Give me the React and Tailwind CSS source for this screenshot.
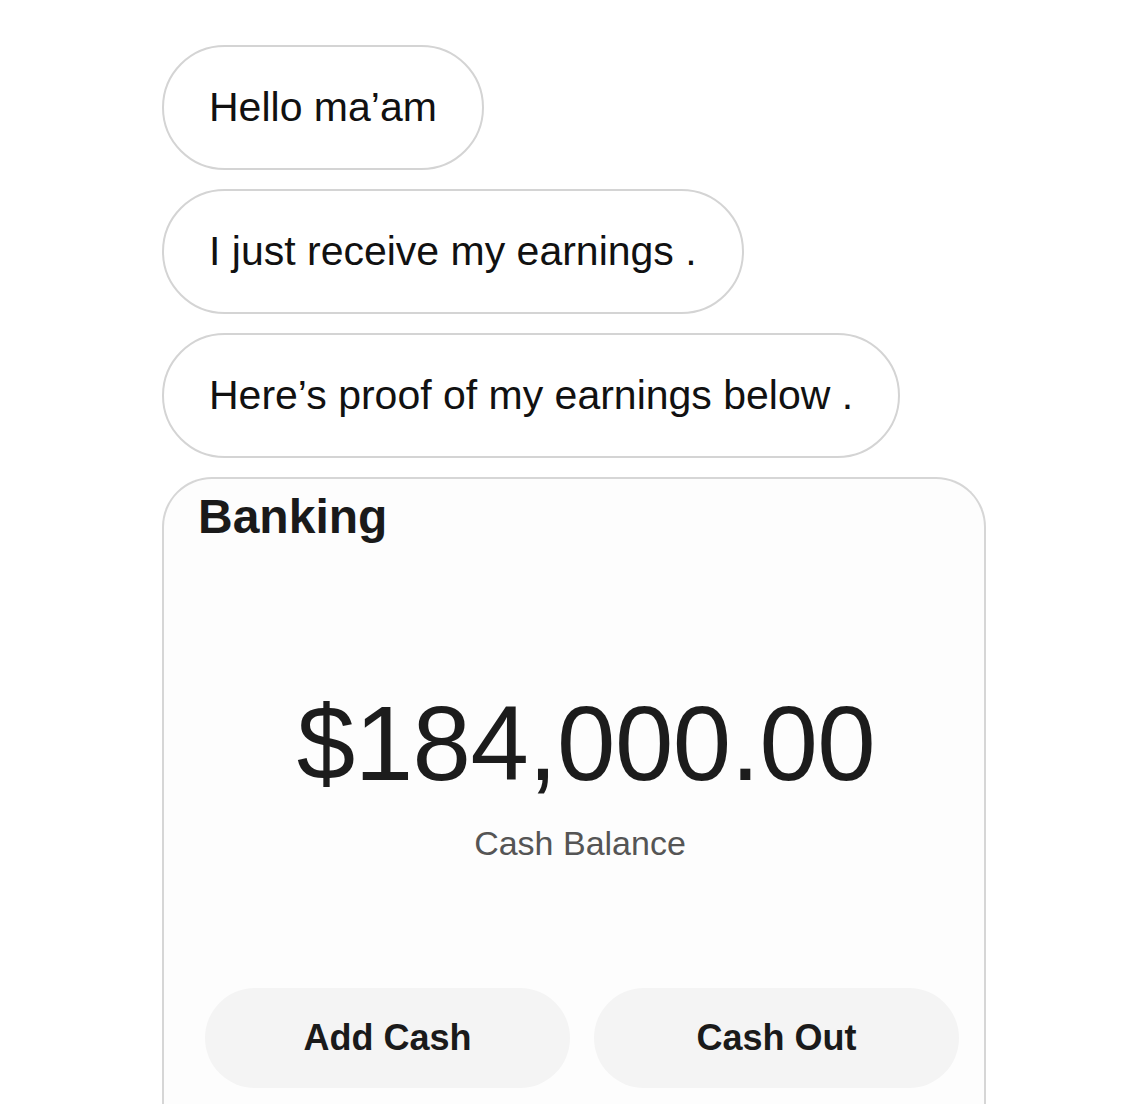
import React from "react";

const font = { fontFamily: '"Liberation Sans", Arial, sans-serif' };

function Bubble({ children }) {
  return (
    <div className="flex h-[125px] shrink-0 items-center self-start rounded-full border-2 border-[#d4d4d4] bg-white px-[45px] text-[41px] text-[#111] leading-none">
      {children}
    </div>
  );
}

export default function App() {
  return (
    <div
      className="flex h-[1104px] w-[1125px] flex-col gap-[19px] overflow-hidden bg-white pl-[162px] pt-[45px]"
      style={font}
    >
      <Bubble>Hello ma’am</Bubble>
      <Bubble>I just receive my earnings .</Bubble>
      <Bubble>Here’s proof of my earnings below .</Bubble>

      <div className="flex h-[700px] w-[824px] shrink-0 flex-col rounded-t-[50px] border-2 border-b-0 border-[#d6d6d6] bg-[#fdfdfd]">
        <div className="pl-[34px] pt-[14px] text-[48px] font-bold leading-none text-[#1a1a1a]">
          Banking
        </div>

        <div className="mt-[150px] pl-[24px] text-center text-[105px] leading-none tracking-[-0.5px] text-[#1c1c1c]">
          $184,000.00
        </div>
        <div className="mt-[30px] pl-[12px] text-center text-[34px] leading-none text-[#555]">
          Cash Balance
        </div>

        <div className="mt-[128px] flex gap-[24px] pl-[41px] pr-[25px]">
          <button className="flex h-[100px] flex-1 items-center justify-center rounded-full bg-[#f4f4f4] text-[36px] font-bold text-[#1a1a1a]">
            Add Cash
          </button>
          <button className="flex h-[100px] flex-1 items-center justify-center rounded-full bg-[#f4f4f4] text-[36px] font-bold text-[#1a1a1a]">
            Cash Out
          </button>
        </div>
      </div>
    </div>
  );
}
